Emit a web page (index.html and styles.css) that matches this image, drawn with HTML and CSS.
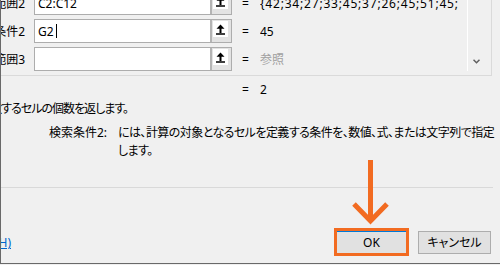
FILE: index.html
```html
<!DOCTYPE html>
<html lang="ja">
<head>
  <meta charset="UTF-8">
  <meta name="viewport" content="width=device-width, initial-scale=1.0">
  <title>関数の引数</title>
  <link rel="stylesheet" href="styles.css">
</head>
<body>

  <div class="frame">
    <div class="args">
      <div class="arg-rows">
        <div class="arg-row">
          <div class="arg-label"><span>検索条件範囲2</span></div>
          <div class="ref-box">
            <span class="ref-text">C2:C12</span>
            <span class="ref-btn"><span class="ref-icon"><svg width="9" height="11" viewBox="0 0 9 11"><path d="M4.5 0.5 L8.5 4.8 H0.5 Z M3.5 4.5 H5.5 V9 H3.5 Z M0 9.3 H9 V10.8 H0 Z" fill="#000"/></svg></span></span>
          </div>
          <div class="eq">=</div>
          <div class="arg-value is-array">{42;34;27;33;45;37;26;45;51;45;52}</div>
        </div>
        <div class="arg-row">
          <div class="arg-label"><span>検索条件2</span></div>
          <div class="ref-box">
            <span class="ref-text">G2<span class="caret"></span></span>
            <span class="ref-btn"><span class="ref-icon"><svg width="9" height="11" viewBox="0 0 9 11"><path d="M4.5 0.5 L8.5 4.8 H0.5 Z M3.5 4.5 H5.5 V9 H3.5 Z M0 9.3 H9 V10.8 H0 Z" fill="#000"/></svg></span></span>
          </div>
          <div class="eq">=</div>
          <div class="arg-value">45</div>
        </div>
        <div class="arg-row">
          <div class="arg-label"><span>検索条件範囲3</span></div>
          <div class="ref-box">
            <span class="ref-text"></span>
            <span class="ref-btn"><span class="ref-icon"><svg width="9" height="11" viewBox="0 0 9 11"><path d="M4.5 0.5 L8.5 4.8 H0.5 Z M3.5 4.5 H5.5 V9 H3.5 Z M0 9.3 H9 V10.8 H0 Z" fill="#000"/></svg></span></span>
          </div>
          <div class="eq">=</div>
          <div class="arg-value is-hint">参照</div>
        </div>
      </div>
      <div class="scrollbar">
        <svg width="7" height="5" viewBox="0 0 7 5"><polyline points="0.5,0.8 3.5,3.8 6.5,0.8" fill="none" stroke="#606060" stroke-width="1.5"/></svg>
      </div>
    </div>

    <div class="result-row">
      <span class="eq">=</span>
      <span>2</span>
    </div>

    <p class="func-desc"><span>指定された範囲に含まれるセルのうち、複数の検索条件に一致するセルの個数を返します。</span></p>

    <div class="arg-desc">
      <span class="arg-name">検索条件2:</span>
      <span class="arg-text">には、計算の対象となるセルを定義する条件を、数値、式、または文字列で指定<br>します。</span>
    </div>

    <div class="footer">
      <div class="help-link"><a href="#">この関数のヘルプ(H)</a></div>
      <div class="buttons">
        <span class="ok-frame"><button class="ok-btn">OK</button></span>
        <button class="cancel-btn">キャンセル</button>
      </div>
    </div>
  </div>

  <!-- callout arrow pointing at OK -->
  <svg class="callout" width="500" height="265" viewBox="0 0 500 265">
    <line x1="370.5" y1="160" x2="370.5" y2="221" stroke="#f26b21" stroke-width="5"/>
    <polyline points="354,204 370.5,221 387,204" fill="none" stroke="#f26b21" stroke-width="5" stroke-linejoin="miter"/>
  </svg>

</body>
</html>
```

FILE: styles.css
```css
body {
  margin: 0;
  width: 500px;
  height: 265px;
  overflow: hidden;
  position: relative;
  background: #f0f0f0;
  font-family: "Noto Sans", "Noto Sans CJK JP", sans-serif;
  font-size: 12px;
  color: #000;
  font-feature-settings: "palt";
}

.frame {
  height: 263px;
  border-left: 1px solid #696969;
  border-bottom: 1px solid #696969;
  overflow: hidden;
}

/* argument list */
.args {
  display: flex;
  width: 491px;
  box-sizing: border-box;
  margin-top: -9px;
  padding: 0 7px 4px 0;
  border-right: 1px solid #dadada;
  border-bottom: 1px solid #dadada;
}

.arg-rows {
  flex: 1;
  display: flex;
  flex-direction: column;
  gap: 4px;
}

.arg-row {
  display: flex;
  align-items: center;
  height: 24px;
}

.arg-label {
  width: 24px;
  margin-right: 9px;
  display: flex;
  justify-content: flex-end;
  white-space: nowrap;
}

.ref-box {
  width: 198px;
  height: 24px;
  box-sizing: border-box;
  border: 1px solid #adadad;
  background: #fff;
  display: flex;
}

.ref-text {
  flex: 1;
  padding-left: 3px;
  display: flex;
  align-items: center;
}

.caret {
  width: 1px;
  height: 14px;
  margin-left: 2px;
  background: #000;
}

.ref-btn {
  width: 21px;
  box-sizing: border-box;
  border-left: 2px solid #b4b4b4;
  background: #e3e3e3;
  padding: 1px 0 0 1px;
}

.ref-icon {
  width: 15px;
  height: 16px;
  background: #fff;
  display: flex;
  align-items: center;
  justify-content: center;
}

.eq {
  margin-left: 10px;
  width: 18px;
}

.arg-value {
  width: 198px;
  overflow: hidden;
  white-space: nowrap;
}

.arg-value.is-array {
  letter-spacing: 0.8px;
}

.arg-value.is-hint {
  color: #a0a0a0;
}

.scrollbar {
  width: 17px;
  box-sizing: border-box;
  border-left: 1px solid #fff;
  display: flex;
  align-items: flex-end;
  justify-content: center;
  padding-bottom: 7px;
}

.scrollbar svg {
  display: block;
}

/* result and descriptions */
.result-row {
  display: flex;
  margin: 6px 0 0 231px;
  line-height: 16px;
}

.func-desc {
  margin: 3px 0 0;
  width: 127px;
  display: flex;
  justify-content: flex-end;
  white-space: nowrap;
  line-height: 16px;
  letter-spacing: -1px;
}

.arg-desc {
  display: flex;
  margin-top: 7px;
  padding-left: 48px;
  line-height: 18px;
}

.arg-name {
  width: 69px;
  flex-shrink: 0;
}

.arg-text {
  white-space: nowrap;
  letter-spacing: -0.55px;
}

/* footer */
.footer {
  margin: 27px 7px 0 0;
  padding: 40px 0 7px;
  border-top: 1px solid #d9d9d9;
  display: flex;
  justify-content: space-between;
  align-items: center;
}

.help-link {
  width: 10px;
  display: flex;
  justify-content: flex-end;
  white-space: nowrap;
}

.help-link a {
  color: #0066cc;
  text-decoration: underline;
}

.buttons {
  display: flex;
  align-items: center;
  gap: 9px;
  padding-right: 2px;
}

.ok-frame {
  display: flex;
  border: 3px solid #f26b21;
}

.ok-btn,
.cancel-btn {
  font: inherit;
  color: #000;
  background: #e1e1e1;
  padding: 0;
  box-sizing: border-box;
}

.ok-btn {
  width: 69px;
  height: 22px;
  border: 0;
  border-top: 1px solid #0078d7;
}

.cancel-btn {
  width: 73px;
  height: 23px;
  border: 1px solid #adadad;
}

.callout {
  position: absolute;
  top: 0;
  left: 0;
  pointer-events: none;
}
```
